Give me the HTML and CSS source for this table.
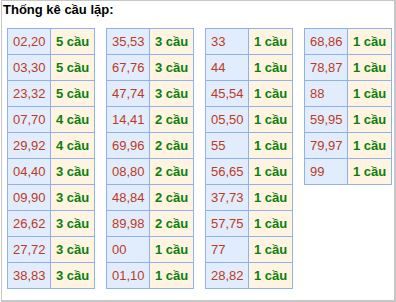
FILE: index.html
```html
<!DOCTYPE html>
<html lang="vi">
<head>
<meta charset="utf-8">
<title>Thống kê cầu lặp</title>
<link rel="stylesheet" href="styles.css">
</head>
<body>
<div class="box">
  <div class="title">Thống kê cầu lặp:</div>
  <div class="tables">
    <table class="tk">
      <tr><td class="num">02,20</td><td class="cnt">5 cầu</td></tr>
      <tr><td class="num">03,30</td><td class="cnt">5 cầu</td></tr>
      <tr><td class="num">23,32</td><td class="cnt">5 cầu</td></tr>
      <tr><td class="num">07,70</td><td class="cnt">4 cầu</td></tr>
      <tr><td class="num">29,92</td><td class="cnt">4 cầu</td></tr>
      <tr><td class="num">04,40</td><td class="cnt">3 cầu</td></tr>
      <tr><td class="num">09,90</td><td class="cnt">3 cầu</td></tr>
      <tr><td class="num">26,62</td><td class="cnt">3 cầu</td></tr>
      <tr><td class="num">27,72</td><td class="cnt">3 cầu</td></tr>
      <tr><td class="num">38,83</td><td class="cnt">3 cầu</td></tr>
    </table>
    <table class="tk">
      <tr><td class="num">35,53</td><td class="cnt">3 cầu</td></tr>
      <tr><td class="num">67,76</td><td class="cnt">3 cầu</td></tr>
      <tr><td class="num">47,74</td><td class="cnt">3 cầu</td></tr>
      <tr><td class="num">14,41</td><td class="cnt">2 cầu</td></tr>
      <tr><td class="num">69,96</td><td class="cnt">2 cầu</td></tr>
      <tr><td class="num">08,80</td><td class="cnt">2 cầu</td></tr>
      <tr><td class="num">48,84</td><td class="cnt">2 cầu</td></tr>
      <tr><td class="num">89,98</td><td class="cnt">2 cầu</td></tr>
      <tr><td class="num">00</td><td class="cnt">1 cầu</td></tr>
      <tr><td class="num">01,10</td><td class="cnt">1 cầu</td></tr>
    </table>
    <table class="tk">
      <tr><td class="num">33</td><td class="cnt">1 cầu</td></tr>
      <tr><td class="num">44</td><td class="cnt">1 cầu</td></tr>
      <tr><td class="num">45,54</td><td class="cnt">1 cầu</td></tr>
      <tr><td class="num">05,50</td><td class="cnt">1 cầu</td></tr>
      <tr><td class="num">55</td><td class="cnt">1 cầu</td></tr>
      <tr><td class="num">56,65</td><td class="cnt">1 cầu</td></tr>
      <tr><td class="num">37,73</td><td class="cnt">1 cầu</td></tr>
      <tr><td class="num">57,75</td><td class="cnt">1 cầu</td></tr>
      <tr><td class="num">77</td><td class="cnt">1 cầu</td></tr>
      <tr><td class="num">28,82</td><td class="cnt">1 cầu</td></tr>
    </table>
    <table class="tk">
      <tr><td class="num">68,86</td><td class="cnt">1 cầu</td></tr>
      <tr><td class="num">78,87</td><td class="cnt">1 cầu</td></tr>
      <tr><td class="num">88</td><td class="cnt">1 cầu</td></tr>
      <tr><td class="num">59,95</td><td class="cnt">1 cầu</td></tr>
      <tr><td class="num">79,97</td><td class="cnt">1 cầu</td></tr>
      <tr><td class="num">99</td><td class="cnt">1 cầu</td></tr>
    </table>
  </div>
</div>
</body>
</html>
```
FILE: styles.css
```css
html, body {
  margin: 0;
  padding: 0;
  background: #fff;
}
body {
  font-family: "Liberation Sans", Arial, sans-serif;
  font-size: 13px;
}
.box {
  box-sizing: border-box;
  width: 395px;
  height: 302px;
  margin-left: 1px;
  border-top: 1px solid #c6c6c6;
  border-left: 1px solid #c6c6c6;
  border-right: 2px solid #c6c6c6;
  border-bottom: 2px solid #c6c6c6;
  padding: 1px 0 0 1px;
}
.title {
  font-weight: bold;
  font-size: 13px;
  line-height: 15px;
  color: #000;
  padding-left: 0;
}
.tables {
  display: flex;
  align-items: flex-start;
  gap: 11px;
  margin-top: 11px;
  padding-left: 4px;
}
.tk {
  border-collapse: separate;
  border-spacing: 0;
  table-layout: fixed;
  width: 88px;
  border-top: 1px solid #8fb1ef;
  border-left: 1px solid #8fb1ef;
}
.tk td {
  height: 25px;
  padding: 0 0 0 5px;
  border-right: 1px solid #8fb1ef;
  border-bottom: 1px solid #8fb1ef;
  white-space: nowrap;
  vertical-align: middle;
  box-sizing: content-box;
}
.num {
  background: #e1edfd;
  color: #bd3a1e;
  width: 37px;
}
.cnt {
  background: #fef4e1;
  color: #0a800a;
  font-weight: bold;
}
```
